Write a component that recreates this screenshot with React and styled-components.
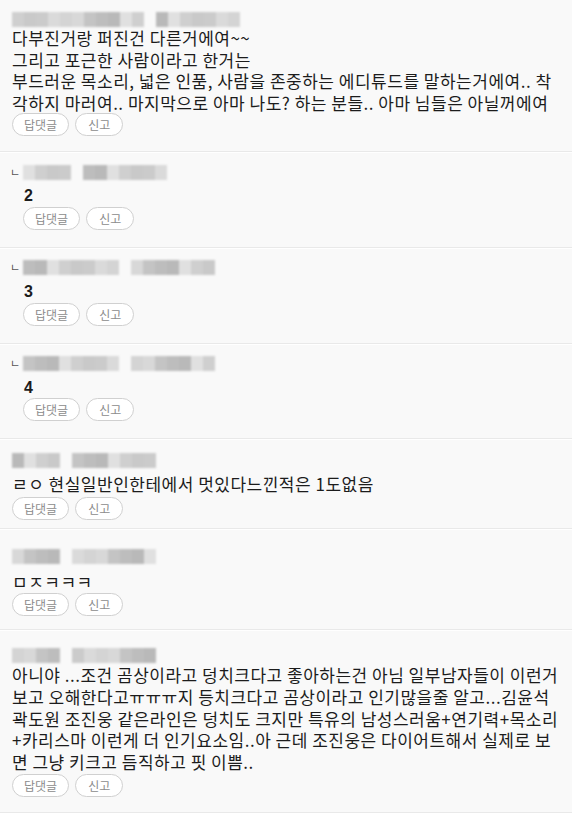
import styled, { createGlobalStyle } from "styled-components";

const Global = createGlobalStyle`
  body {
    margin: 0;
    background: #f9f9f9;
    font-family: "Noto Sans CJK KR", "Noto Sans", "Liberation Sans", sans-serif;
    color: #1c1c1c;
  }
`;

const List = styled.div`
  width: 572px;
`;

const Item = styled.div`
  padding: ${p => p.$top}px 12px ${p => p.$bottom}px ${p => (p.$reply ? 10 : 12)}px;
  border-bottom: 1px solid #e9e9e9;
  box-shadow: 0 1px 0 #ffffff;
`;

const Head = styled.div`
  display: flex;
  align-items: center;
  height: 16px;
`;

const Mark = styled.span`
  font-size: 11px;
  line-height: 1;
  color: #555;
  width: 13px;
`;

const Blur = styled.div`
  display: flex;
  height: 15px;
  margin-right: ${p => p.$gap}px;
  filter: blur(1.2px);
`;

const Cell = styled.span`
  width: 12px;
  height: 100%;
`;

const Body = styled.div`
  padding-left: ${p => (p.$reply ? 13 : 0)}px;
`;

const Text = styled.div`
  margin-top: ${p => p.$mt}px;
`;

const Line = styled.div`
  height: 21.6px;
  font-size: 17px;
  line-height: 21.6px;
  letter-spacing: 0.5px;
  white-space: nowrap;
`;

const Num = styled.div`
  font-size: 16px;
  line-height: 21.6px;
  font-weight: bold;
  font-family: "Liberation Sans", Arial, sans-serif;
  padding-left: 1px;
  margin-top: 5px;
`;

const Actions = styled.div`
  display: flex;
  gap: 6px;
  margin-top: ${p => p.$mt}px;
`;

const Pill = styled.button`
  height: 23px;
  padding: 0 ${p => p.$px}px;
  border: 1px solid #d0d0d0;
  border-radius: 12px;
  background: #ffffff;
  color: #8c8c8c;
  font-family: inherit;
  font-size: 12px;
  line-height: 21px;
  cursor: pointer;
`;

const shades = ["#c9c9c9", "#d4d4d4", "#bdbdbd", "#cfcfcf", "#dadada", "#c4c4c4", "#e0e0e0", "#cbcbcb", "#d8d8d8", "#b9b9b9"];

function Name({ a, b, seed }) {
  const cells = (n, s) =>
    Array.from({ length: n }, (_, i) => (
      <Cell key={i} style={{ background: shades[(i * 7 + s * 3) % shades.length] }} />
    ));
  return (
    <>
      <Blur $gap={12}>{cells(a, seed)}</Blur>
      <Blur $gap={0}>{cells(b, seed + 2)}</Blur>
    </>
  );
}

function Buttons({ mt }) {
  return (
    <Actions $mt={mt}>
      <Pill $px={11}>답댓글</Pill>
      <Pill $px={12}>신고</Pill>
    </Actions>
  );
}

function Lines({ mt, lines }) {
  return (
    <Text $mt={mt}>
      {lines.map((l, i) => (
        <Line key={i}>{l}</Line>
      ))}
    </Text>
  );
}

function Reply({ num, a, b, seed }) {
  return (
    <Item $reply $top={12} $bottom={17}>
      <Head>
        <Mark>ㄴ</Mark>
        <Name a={a} b={b} seed={seed} />
      </Head>
      <Body $reply>
        <Num>{num}</Num>
        <Buttons mt={0} />
      </Body>
    </Item>
  );
}

export default function App() {
  return (
    <List>
      <Global />
      <Item $top={11} $bottom={15}>
        <Head>
          <Name a={11} b={7} seed={1} />
        </Head>
        <Body>
          <Lines
            mt={0}
            lines={[
              "다부진거랑 퍼진건 다른거에여~~",
              "그리고 포근한 사람이라고 한거는",
              "부드러운 목소리, 넓은 인품, 사람을 존중하는 에디튜드를 말하는거에여.. 착",
              "각하지 마러여.. 마지막으로 아마 나도? 하는 분들.. 아마 님들은 아닐꺼에여",
            ]}
          />
          <Buttons mt={0} />
        </Body>
      </Item>
      <Reply num="2" a={4} b={7} seed={2} />
      <Reply num="3" a={8} b={7} seed={4} />
      <Reply num="4" a={8} b={7} seed={5} />
      <Item $top={13} $bottom={8}>
        <Head>
          <Name a={4} b={7} seed={3} />
        </Head>
        <Body>
          <Lines mt={5} lines={["ㄹㅇ 현실일반인한테에서 멋있다느낀적은 1도없음"]} />
          <Buttons mt={2} />
        </Body>
      </Item>
      <Item $top={20} $bottom={13}>
        <Head>
          <Name a={4} b={7} seed={6} />
        </Head>
        <Body>
          <Lines mt={6} lines={["ㅁㅈㅋㅋㅋ"]} />
          <Buttons mt={1} />
        </Body>
      </Item>
      <Item $top={17} $bottom={15}>
        <Head>
          <Name a={4} b={7} seed={7} />
        </Head>
        <Body>
          <Lines
            mt={1}
            lines={[
              "아니야 ...조건 곰상이라고 덩치크다고 좋아하는건 아님 일부남자들이 이런거",
              "보고 오해한다고ㅠㅠㅠ지 등치크다고 곰상이라고 인기많을줄 알고...김윤석",
              "곽도원 조진웅 같은라인은 덩치도 크지만 특유의 남성스러움+연기력+목소리",
              "+카리스마 이런게 더 인기요소임..아 근데 조진웅은 다이어트해서 실제로 보",
              "면 그냥 키크고 듬직하고 핏 이쁨..",
            ]}
          />
          <Buttons mt={2} />
        </Body>
      </Item>
    </List>
  );
}
